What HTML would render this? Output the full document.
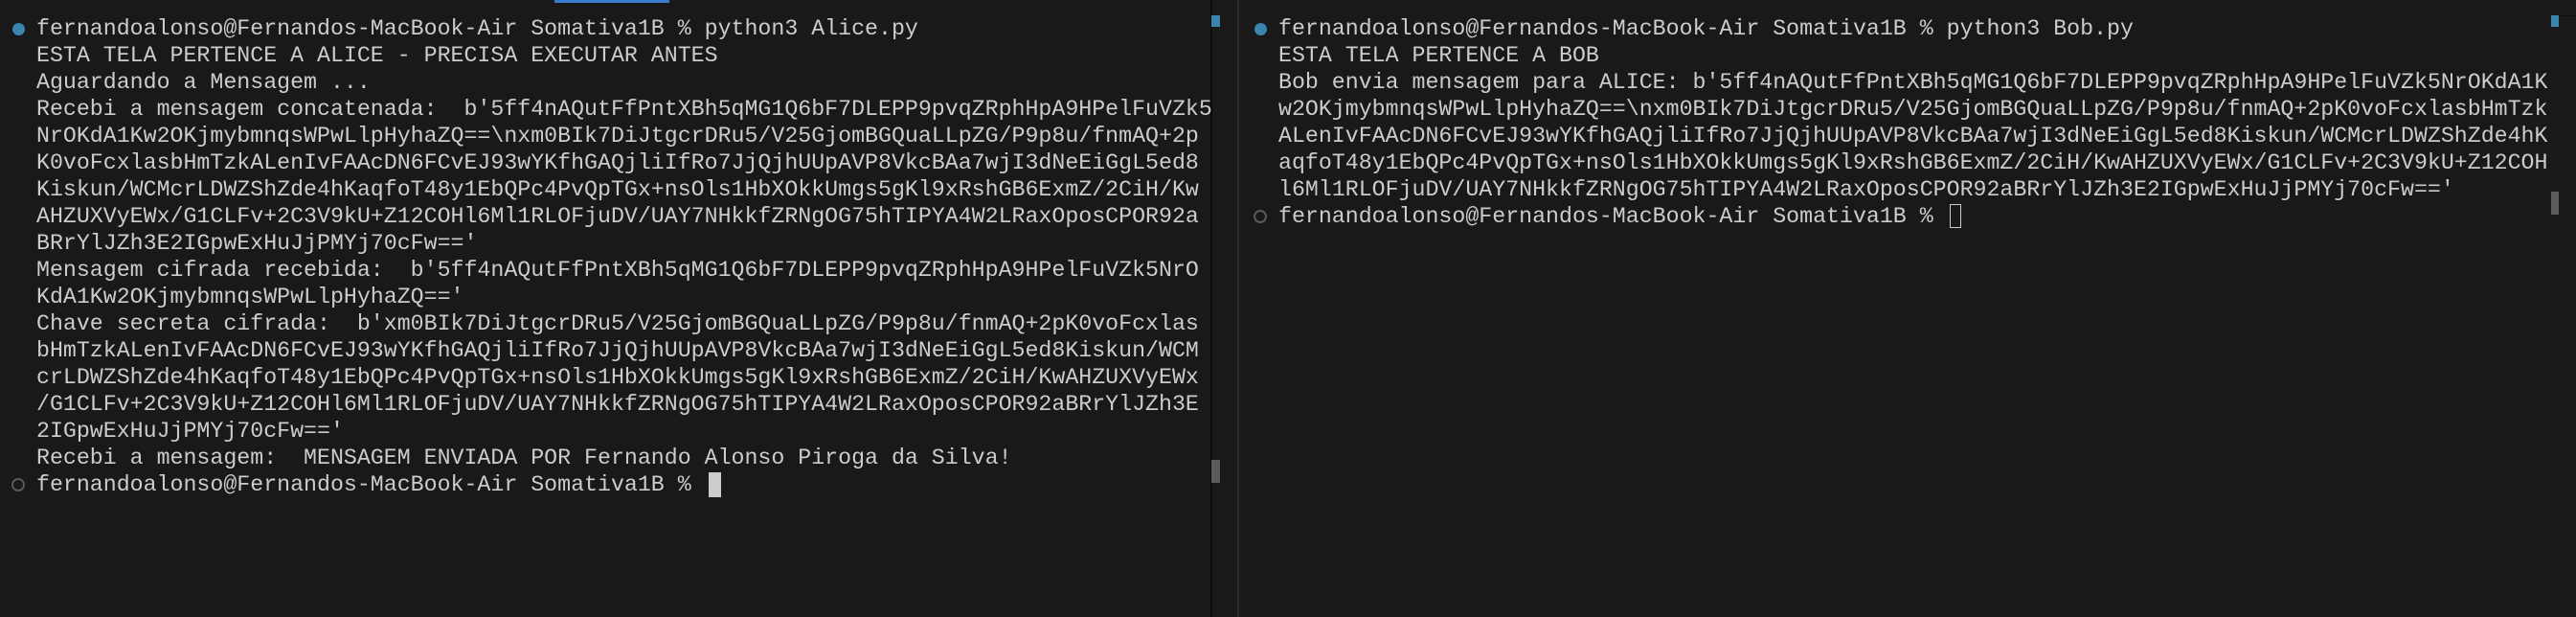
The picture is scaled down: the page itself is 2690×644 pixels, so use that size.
<!DOCTYPE html>
<html><head><meta charset="utf-8"><style>
html,body{margin:0;padding:0;background:#191919;width:2690px;height:644px;overflow:hidden;position:relative}
pre{position:absolute;margin:0;font-family:"Liberation Mono",monospace;font-size:23.25px;line-height:28px;color:#cccccc;white-space:pre}
.dot{position:absolute;width:13px;height:13px;border-radius:50%;background:#3b84ad}
.hol{position:absolute;width:10px;height:10px;border-radius:50%;border:2px solid #5a5a5a}
.abs{position:absolute}
</style></head><body>
<div class="abs" style="left:579px;top:0;width:120px;height:3px;background:#3a7bd0"></div>
<div class="abs" style="left:1264px;top:0;width:2px;height:644px;background:#0c0c0c"></div>
<div class="abs" style="left:1292px;top:0;width:2px;height:644px;background:#2a2a2a"></div>
<div class="abs" style="left:1265px;top:16px;width:9px;height:12px;background:#3b84ad"></div>
<div class="abs" style="left:1265px;top:480px;width:9px;height:24px;background:#5c5c5c"></div>
<div class="abs" style="left:2664px;top:16px;width:8px;height:12px;background:#3b84ad"></div>
<div class="abs" style="left:2672px;top:16px;width:18px;height:1px;background:#0c0c0c"></div>
<div class="abs" style="left:2664px;top:200px;width:8px;height:24px;background:#5c5c5c"></div>
<div class="dot" style="left:13px;top:24px"></div>
<div class="hol" style="left:12px;top:499px"></div>
<div class="dot" style="left:1310px;top:24px"></div>
<div class="hol" style="left:1309px;top:219px"></div>
<pre style="left:38px;top:16px">fernandoalonso@Fernandos-MacBook-Air Somativa1B % python3 Alice.py
ESTA TELA PERTENCE A ALICE - PRECISA EXECUTAR ANTES
Aguardando a Mensagem ...
Recebi a mensagem concatenada:  b'5ff4nAQutFfPntXBh5qMG1Q6bF7DLEPP9pvqZRphHpA9HPelFuVZk5
NrOKdA1Kw2OKjmybmnqsWPwLlpHyhaZQ==\nxm0BIk7DiJtgcrDRu5/V25GjomBGQuaLLpZG/P9p8u/fnmAQ+2p
K0voFcxlasbHmTzkALenIvFAAcDN6FCvEJ93wYKfhGAQjliIfRo7JjQjhUUpAVP8VkcBAa7wjI3dNeEiGgL5ed8
Kiskun/WCMcrLDWZShZde4hKaqfoT48y1EbQPc4PvQpTGx+nsOls1HbXOkkUmgs5gKl9xRshGB6ExmZ/2CiH/Kw
AHZUXVyEWx/G1CLFv+2C3V9kU+Z12COHl6Ml1RLOFjuDV/UAY7NHkkfZRNgOG75hTIPYA4W2LRaxOposCPOR92a
BRrYlJZh3E2IGpwExHuJjPMYj70cFw=='
Mensagem cifrada recebida:  b'5ff4nAQutFfPntXBh5qMG1Q6bF7DLEPP9pvqZRphHpA9HPelFuVZk5NrO
KdA1Kw2OKjmybmnqsWPwLlpHyhaZQ=='
Chave secreta cifrada:  b'xm0BIk7DiJtgcrDRu5/V25GjomBGQuaLLpZG/P9p8u/fnmAQ+2pK0voFcxlas
bHmTzkALenIvFAAcDN6FCvEJ93wYKfhGAQjliIfRo7JjQjhUUpAVP8VkcBAa7wjI3dNeEiGgL5ed8Kiskun/WCM
crLDWZShZde4hKaqfoT48y1EbQPc4PvQpTGx+nsOls1HbXOkkUmgs5gKl9xRshGB6ExmZ/2CiH/KwAHZUXVyEWx
/G1CLFv+2C3V9kU+Z12COHl6Ml1RLOFjuDV/UAY7NHkkfZRNgOG75hTIPYA4W2LRaxOposCPOR92aBRrYlJZh3E
2IGpwExHuJjPMYj70cFw=='
Recebi a mensagem:  MENSAGEM ENVIADA POR Fernando Alonso Piroga da Silva!
fernandoalonso@Fernandos-MacBook-Air Somativa1B % </pre>
<div class="abs" style="left:740px;top:493px;width:13px;height:26px;background:#cccccc"></div>
<pre style="left:1335px;top:16px">fernandoalonso@Fernandos-MacBook-Air Somativa1B % python3 Bob.py
ESTA TELA PERTENCE A BOB
Bob envia mensagem para ALICE: b'5ff4nAQutFfPntXBh5qMG1Q6bF7DLEPP9pvqZRphHpA9HPelFuVZk5NrOKdA1K
w2OKjmybmnqsWPwLlpHyhaZQ==\nxm0BIk7DiJtgcrDRu5/V25GjomBGQuaLLpZG/P9p8u/fnmAQ+2pK0voFcxlasbHmTzk
ALenIvFAAcDN6FCvEJ93wYKfhGAQjliIfRo7JjQjhUUpAVP8VkcBAa7wjI3dNeEiGgL5ed8Kiskun/WCMcrLDWZShZde4hK
aqfoT48y1EbQPc4PvQpTGx+nsOls1HbXOkkUmgs5gKl9xRshGB6ExmZ/2CiH/KwAHZUXVyEWx/G1CLFv+2C3V9kU+Z12COH
l6Ml1RLOFjuDV/UAY7NHkkfZRNgOG75hTIPYA4W2LRaxOposCPOR92aBRrYlJZh3E2IGpwExHuJjPMYj70cFw=='
fernandoalonso@Fernandos-MacBook-Air Somativa1B % </pre>
<div class="abs" style="left:2036px;top:213px;width:10px;height:23px;border:1.5px solid #cccccc"></div>
</body></html>
